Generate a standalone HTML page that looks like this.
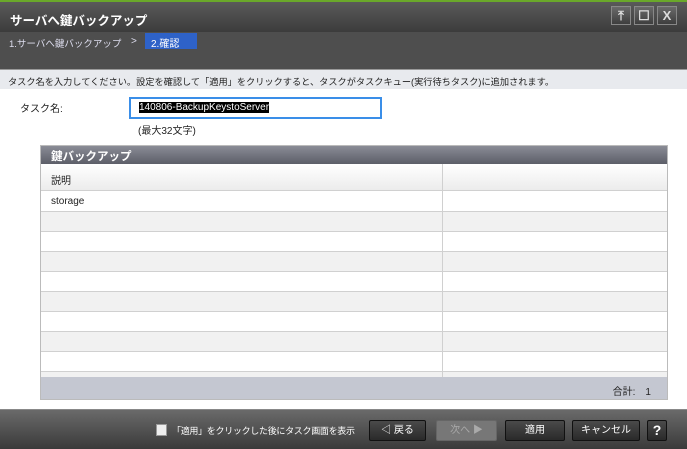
<!DOCTYPE html>
<html><head><meta charset="utf-8"><style>
*{margin:0;padding:0;box-sizing:border-box}
body{width:687px;height:449px;overflow:hidden;background:#fff;font-family:"Liberation Sans","Noto Sans CJK JP",sans-serif;font-size:10px;color:#222;position:relative}
.abs{position:absolute}
.title{left:0;top:0;width:687px;height:32px;background:linear-gradient(#5a5a5a,#3c3c3c);border-top:2px solid #6aa82a;color:#fff;font-size:12.5px;font-weight:bold;padding:8px 10px}
.wb{top:6px;width:20px;height:19px;border:1px solid #888;background:linear-gradient(#6a6a6a,#3e3e3e);color:#ddd;text-align:center;font-size:13px;line-height:17px;font-weight:bold}
.crumb{left:0;top:32px;width:687px;height:37px;background:#4e4e4e;color:#dde}
.info{left:0;top:69px;width:687px;height:20px;background:#e8eaee;padding:4px 8px;font-size:9.2px;border-top:1px solid #999}
.tbl{left:40px;top:145px;width:628px;height:255px;border:1px solid #bbb;overflow:hidden}
.row{position:absolute;left:0;width:628px;border-bottom:1px solid #d0d0d0}
.row::after{content:"";position:absolute;left:401px;top:0;bottom:0;border-left:1px solid #d0d0d0}
.btn{top:420px;height:21px;border:1px solid #111;border-radius:2px;background:linear-gradient(#4a4a4a,#2a2a2a);color:#fff;text-align:center;line-height:19px;font-size:10px}
</style></head><body>
<div class="abs title">サーバへ鍵バックアップ</div>
<div class="abs wb" style="left:611px">⤒</div>
<div class="abs wb" style="left:634px">☐</div>
<div class="abs wb" style="left:657px">X</div>
<div class="abs crumb"><span class="abs" style="left:9px;top:4px;font-size:9.5px">1.サーバへ鍵バックアップ</span><span class="abs" style="left:131px;top:4px">&gt;</span><span class="abs" style="left:145px;top:1px;width:52px;height:16px;background:#2e62c8;color:#fff;padding:2px 6px">2.確認</span></div>
<div class="abs info">タスク名を入力してください。設定を確認して「適用」をクリックすると、タスクがタスクキュー(実行待ちタスク)に追加されます。</div>
<div class="abs" style="left:20px;top:100px">タスク名:</div>
<div class="abs" style="left:129px;top:97px;width:253px;height:22px;border:2px solid #3a8ee8;padding:3px 8px"><span style="background:#000;color:#fff">140806-BackupKeystoServer</span></div>
<div class="abs" style="left:138px;top:122px">(最大32文字)</div>
<div class="abs tbl">
<div class="abs" style="left:0;top:0;width:628px;height:18px;background:linear-gradient(#8a8c96,#5c5e68);color:#fff;font-weight:bold;font-size:11.5px;padding:2px 10px">鍵バックアップ</div>
<div class="row" style="top:18px;height:27px;background:linear-gradient(#fff,#ececec);padding:8px 10px">説明</div>
<div class="row" style="top:45px;height:21px;background:#fff;padding:5px 10px">storage</div>
<div class="row" style="top:66px;height:20px;background:#f1f1f1"></div>
<div class="row" style="top:86px;height:20px;background:#fff"></div>
<div class="row" style="top:106px;height:20px;background:#f1f1f1"></div>
<div class="row" style="top:126px;height:20px;background:#fff"></div>
<div class="row" style="top:146px;height:20px;background:#f1f1f1"></div>
<div class="row" style="top:166px;height:20px;background:#fff"></div>
<div class="row" style="top:186px;height:20px;background:#f1f1f1"></div>
<div class="row" style="top:206px;height:20px;background:#fff"></div>
<div class="row" style="top:226px;height:20px;background:#f1f1f1"></div>
<div class="abs" style="left:0;top:231px;width:628px;height:24px;background:#c4c7d1;text-align:right;padding:6px 18px 0 0">合計:　1</div>
</div>
<div class="abs" style="left:0;top:409px;width:687px;height:40px;background:linear-gradient(#6a6a6a,#3a3a3a);border-top:1px solid #888"></div>
<div class="abs" style="left:156px;top:424px;width:11px;height:12px;background:#eee;border:1px solid #999"></div>
<div class="abs" style="left:172px;top:424px;color:#fff;font-size:9px;letter-spacing:-0.3px;white-space:nowrap">「適用」をクリックした後にタスク画面を表示</div>
<div class="abs btn" style="left:369px;width:57px">◁ 戻る</div>
<div class="abs btn" style="left:436px;width:61px;background:#777;border-color:#666;color:#aaa">次へ ▶</div>
<div class="abs btn" style="left:505px;width:60px">適用</div>
<div class="abs btn" style="left:572px;width:68px">キャンセル</div>
<div class="abs btn" style="left:647px;width:20px;font-weight:bold;font-size:14px">?</div>
</body></html>
